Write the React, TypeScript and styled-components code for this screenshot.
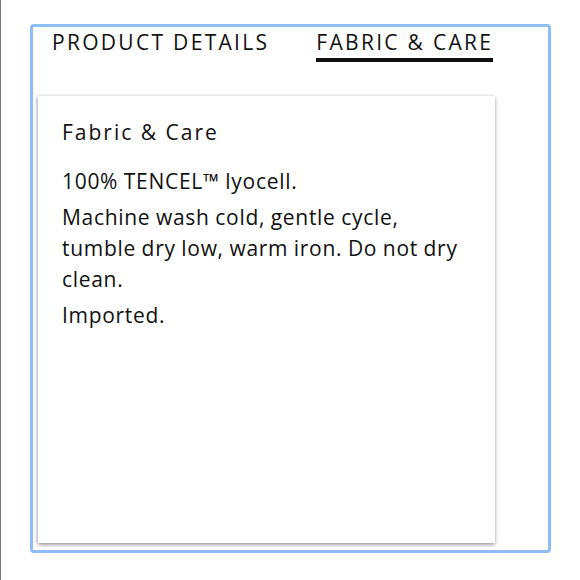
import React, { useState } from "react";
import styled, { createGlobalStyle } from "styled-components";

const GlobalStyle = createGlobalStyle`
  html, body { margin: 0; padding: 0; background: #ffffff; }
  body { font-family: "Open Sans", "Noto Sans", sans-serif; color: #111111; }
`;

const Page = styled.div`
  min-height: 100vh;
  box-sizing: border-box;
  border-left: 1px solid #7a7a7a;
  padding: 24px 0 0 29px;
`;

const Frame = styled.section`
  box-sizing: border-box;
  width: 521px;
  height: 529px;
  border: 3px solid #8dbdf4;
  border-radius: 4px;
  padding: 0 0 0 5px;
  display: flex;
  flex-direction: column;
`;

const TabBar = styled.div`
  display: flex;
  gap: 47px;
  padding-left: 14px;
`;

const Tab = styled.button<{ $active: boolean }>`
  font-family: inherit;
  font-size: 21px;
  letter-spacing: 2.3px;
  color: #111111;
  background: none;
  border: none;
  padding: 2px 0 3px;
  line-height: 26px;
  cursor: pointer;
  border-bottom: 4px solid ${(p) => (p.$active ? "#111111" : "transparent")};
`;

const Card = styled.article`
  box-sizing: border-box;
  margin-top: 34px;
  width: 457px;
  height: 447px;
  background: #ffffff;
  box-shadow: 0 2px 4px rgba(0, 0, 0, 0.35), -1px 0 3px rgba(0, 0, 0, 0.15);
  padding: 20px 24px;
`;

const CardTitle = styled.h3`
  margin: 0 0 18px;
  font-size: 21px;
  font-weight: 400;
  letter-spacing: 2px;
  line-height: 32px;
`;

const Para = styled.p`
  margin: 0 0 5px;
  font-size: 21px;
  line-height: 31px;
  letter-spacing: 0.7px;
  word-spacing: -0.5px;
`;

export default function App() {
  const [tab, setTab] = useState(1);
  return (
    <>
      <GlobalStyle />
      <Page>
        <Frame>
          <TabBar>
            <Tab $active={tab === 0} onClick={() => setTab(0)}>PRODUCT DETAILS</Tab>
            <Tab $active={tab === 1} onClick={() => setTab(1)}>FABRIC &amp; CARE</Tab>
          </TabBar>
          <Card>
            <CardTitle>Fabric &amp; Care</CardTitle>
            <Para>100% TENCEL™ lyocell.</Para>
            <Para>Machine wash cold, gentle cycle, tumble dry low, warm iron. Do not dry clean.</Para>
            <Para>Imported.</Para>
          </Card>
        </Frame>
      </Page>
    </>
  );
}
